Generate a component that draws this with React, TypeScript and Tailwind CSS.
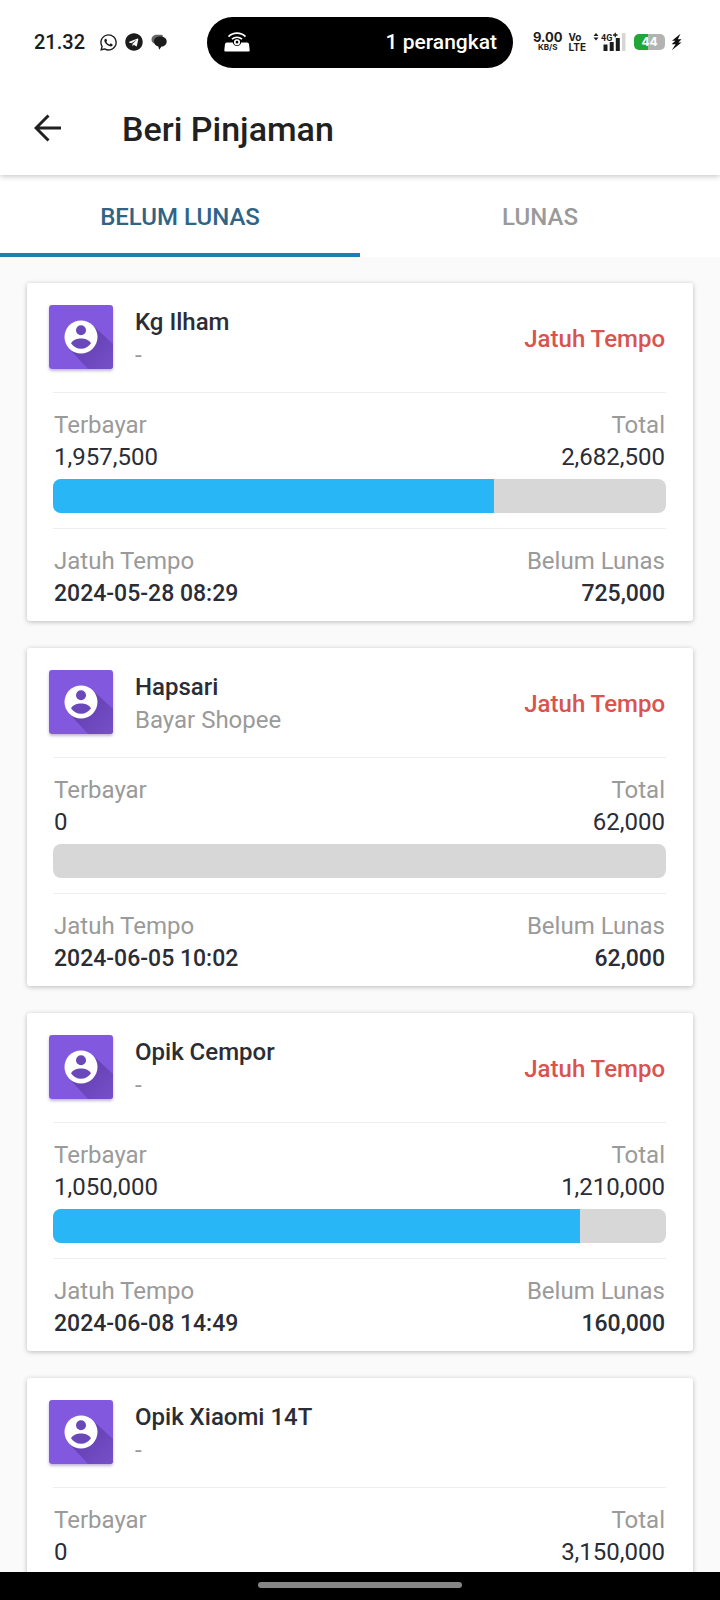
import React from "react";
import { FaTelegram, FaWhatsapp } from "react-icons/fa";

type Loan = {
  name: string;
  note: string;
  overdue: boolean;
  paid: number;
  total: number;
  due?: string;
};

const loans: Loan[] = [
  { name: "Kg Ilham", note: "-", overdue: true, paid: 1957500, total: 2682500, due: "2024-05-28 08:29" },
  { name: "Hapsari", note: "Bayar Shopee", overdue: true, paid: 0, total: 62000, due: "2024-06-05 10:02" },
  { name: "Opik Cempor", note: "-", overdue: true, paid: 1050000, total: 1210000, due: "2024-06-08 14:49" },
  { name: "Opik Xiaomi 14T", note: "-", overdue: false, paid: 0, total: 3150000 },
];

const money = (n: number) => n.toLocaleString("en-US");

function MessageIcon() {
  return (
    <svg viewBox="0 0 16 16" className="size-4" aria-hidden="true">
      <path d="M0.500 5.500C.5 2.500 3 .8 6 .8h3.500c1 0 2 .3 2.500.9l-1 2-6.800 5.800H3.400C1.500 9 .5 7.500.5 5.500Z" fill="#666" />
      <path d="M3 7.400C3 4.500 5.600 2.500 9.200 2.500s6.500 1.900 6.500 4.900-2.300 4.900-5.200 5.200L8.200 15.700l-.9-3.300C4.700 11.800 3 10 3 7.400Z" fill="#1c1c1c" />
    </svg>
  );
}

function HotspotIcon() {
  return (
    <svg viewBox="0 0 26 20" className="h-5 w-[26px]" fill="none" aria-hidden="true">
      <path d="M3 10.500h5.800a4.300 4.300 0 0 0 8.400 0H23a2 2 0 0 1 2 1.500l.7 6.200a1.200 1.200 0 0 1-1.200 1.300h-23A1.200 1.200 0 0 1 .3 18.200L1 12a2 2 0 0 1 2-1.500Z" fill="#fff" />
      <circle cx="13" cy="10.200" r="2.200" stroke="#fff" strokeWidth="1.700" />
      <path d="M4.500 4.600c4.800-4.600 12.200-4.600 17 0M8 7.200c2.900-2.600 7.100-2.600 10 0" stroke="#fff" strokeWidth="1.700" />
    </svg>
  );
}

function SignalIcon() {
  return (
    <svg viewBox="0 0 33 20" className="h-5 w-[33px]" aria-hidden="true">
      <path d="M.5 4 3 1l2.500 3ZM.5 5.500 3 8.500l2.500-3Z" fill="#1c1c1c" />
      <text x="8" y="8.500" fontSize="9" fontWeight="700" fontFamily="Roboto, sans-serif" fill="#1c1c1c">4G</text>
      <path d="M20 3h4.500M22.250 .8v4.500" stroke="#1c1c1c" strokeWidth="1.300" />
      <path d="M10.500 12.500h4V19h-4ZM16.700 10h4V19h-4ZM22.800 6h4V19h-4Z" fill="#1c1c1c" />
      <path d="M29 1h3.500v18H29Z" fill="#d6d6d6" />
    </svg>
  );
}

function BoltIcon() {
  return (
    <svg viewBox="0 0 11 18" className="h-[18px] w-[11px]" aria-hidden="true">
      <path d="M9.500.8 1 7.800h3.400L.6 11.200h4L.8 17.200l9.700-7.600H7.400l3.100-3.400H6.900Z" fill="#111" />
    </svg>
  );
}

function BackArrow() {
  return (
    <svg viewBox="0 0 28 28" className="size-7" fill="none" aria-hidden="true">
      <path d="M27 14H2M14.500 1.500 2 14l12.500 12.500" stroke="#212121" strokeWidth="3" />
    </svg>
  );
}

function Avatar() {
  return (
    <svg viewBox="0 0 64 64" className="size-16 shrink-0 rounded-[3px] shadow-[0_2px_3px_rgba(80,50,150,0.35)]" aria-hidden="true">
      <defs>
        <linearGradient id="cast" x1="0.3" y1="0.3" x2="1" y2="1">
          <stop offset="0" stopColor="#6540b3" />
          <stop offset="1" stopColor="#7650c8" />
        </linearGradient>
      </defs>
      <rect width="64" height="64" fill="#8258df" />
      <path d="M43.700 20.300 64 39V64H39L20.300 43.700Z" fill="url(#cast)" />
      <circle cx="32" cy="32" r="16.500" fill="#fff" />
      <circle cx="32" cy="25.300" r="5" fill="#6b48ba" />
      <path d="M22 38.200c2-3.300 6.300-4.700 10-4.700s8 1.400 10 4.700c-2.200 3.500-5.900 5.600-10 5.600s-7.800-2.100-10-5.600Z" fill="#6b48ba" />
    </svg>
  );
}

function Pair({ left, right, value, amount, strong }: { left: string; right: string; value: string; amount: string; strong?: boolean }) {
  const valueStyle = strong ? "pt-px text-[23px] font-medium text-[#2b2d36]" : "text-[#2b2d36]";
  return (
    <dl className="flex justify-between px-px">
      <div>
        <dt className="text-[#9a9a9a]">{left}</dt>
        <dd className={valueStyle}>{value}</dd>
      </div>
      <div className="text-right">
        <dt className="text-[#9a9a9a]">{right}</dt>
        <dd className={valueStyle}>{amount}</dd>
      </div>
    </dl>
  );
}

function LoanCard({ loan }: { loan: Loan }) {
  return (
    <li className="shrink-0 rounded-[3px] bg-white pt-[22px] pr-[27px] pb-[11px] pl-[26px] text-2xl leading-8 shadow-[0_1px_5px_rgba(0,0,0,0.25)]">
      <div className="-ml-1 flex items-start pb-5">
        <Avatar />
        <div className="ml-[22px] flex-1 pt-px leading-[33px]">
          <h2 className="font-medium text-[#2b2d36]">{loan.name}</h2>
          <p className="text-[#9a9a9a]">{loan.note}</p>
        </div>
        {loan.overdue && <span className="self-center pt-px pr-px font-medium text-[#d9534f]">Jatuh Tempo</span>}
      </div>
      <div className="border-t border-[#eceff1] pt-4">
        <Pair left="Terbayar" right="Total" value={money(loan.paid)} amount={money(loan.total)} />
        <div
          role="progressbar"
          aria-label="Terbayar"
          aria-valuemin={0}
          aria-valuemax={loan.total}
          aria-valuenow={loan.paid}
          className="mt-1.5 h-[34px] overflow-hidden rounded-lg bg-[#d7d7d7]"
        >
          <div className="h-full bg-[#29b6f6]" style={{ width: `${Math.floor((loan.paid / loan.total) * 100)}%` }} />
        </div>
      </div>
      {loan.due && (
        <div className="mt-[15px] border-t border-[#eceff1] pt-4">
          <Pair left="Jatuh Tempo" right="Belum Lunas" value={loan.due} amount={money(loan.total - loan.paid)} strong />
        </div>
      )}
    </li>
  );
}

function StatusBar() {
  return (
    <div className="flex h-[84px] items-center px-[34px] text-[#1c1c1c]">
      <div className="flex flex-1 items-center">
        <span className="text-xl font-medium">21.32</span>
        <FaWhatsapp className="ml-3.5 size-[19px]" />
        <FaTelegram className="ml-[7px] size-[18px]" />
        <span className="ml-2"><MessageIcon /></span>
      </div>
      <div className="flex h-[51px] w-[306px] items-center justify-between rounded-full bg-black pr-4 pl-[17px] text-white">
        <HotspotIcon />
        <span className="pt-0.5 text-[21px] font-medium">1 perangkat</span>
      </div>
      <div className="flex flex-1 items-center justify-end font-['Inter',sans-serif] font-bold">
        <div className="text-center">
          <div className="text-[13px] leading-[11px]">9.00</div>
          <div className="text-[8px] leading-[9px]">KB/S</div>
        </div>
        <div className="ml-1.5 text-[10px] leading-[10px]">
          <div>Vo</div>
          <div>LTE</div>
        </div>
        <span className="ml-[7px]"><SignalIcon /></span>
        <span className="ml-2 flex h-4 w-[31px] items-center justify-center rounded-[5px] bg-linear-to-r from-[#22a638] from-45% to-[#b3b3b3] to-45% text-xs text-white">44</span>
        <span className="mr-1 ml-1.5"><BoltIcon /></span>
      </div>
    </div>
  );
}

export default function App() {
  const [tab, setTab] = React.useState(0);
  return (
    <div className="flex h-screen flex-col bg-[#fafafa] font-['Roboto',sans-serif]">
      <header className="relative shrink-0 bg-white shadow-[0_1px_6px_rgba(0,0,0,0.25)]">
        <StatusBar />
        <div className="flex h-[91px] items-center pb-1 pl-[34px]">
          <button type="button" aria-label="Kembali"><BackArrow /></button>
          <h1 className="ml-[60px] pt-0.5 text-[34px] leading-10 font-medium text-[#212121]">Beri Pinjaman</h1>
        </div>
      </header>
      <div role="tablist" className="flex h-[82px] shrink-0 bg-white text-2xl font-medium">
        {["BELUM LUNAS", "LUNAS"].map((label, i) => (
          <button
            key={label}
            type="button"
            role="tab"
            aria-selected={tab === i}
            onClick={() => setTab(i)}
            className={
              tab === i
                ? "flex-1 border-b-4 border-[#1b7eb5] pt-1.5 text-[#2f6487]"
                : "flex-1 border-b-4 border-transparent pt-1.5 text-[#9a9a9a]"
            }
          >
            {label}
          </button>
        ))}
      </div>
      <main className="min-h-0 flex-1 overflow-y-auto px-[27px] py-[26px] [scrollbar-width:none]">
        <ul className="flex flex-col gap-[27px]">
          {loans.filter(() => tab === 0).map((loan) => (
            <LoanCard key={loan.name} loan={loan} />
          ))}
        </ul>
      </main>
      <footer className="flex h-7 shrink-0 justify-center bg-black pt-2.5">
        <div className="h-1.5 w-[204px] rounded-full bg-[#868686]" />
      </footer>
    </div>
  );
}
